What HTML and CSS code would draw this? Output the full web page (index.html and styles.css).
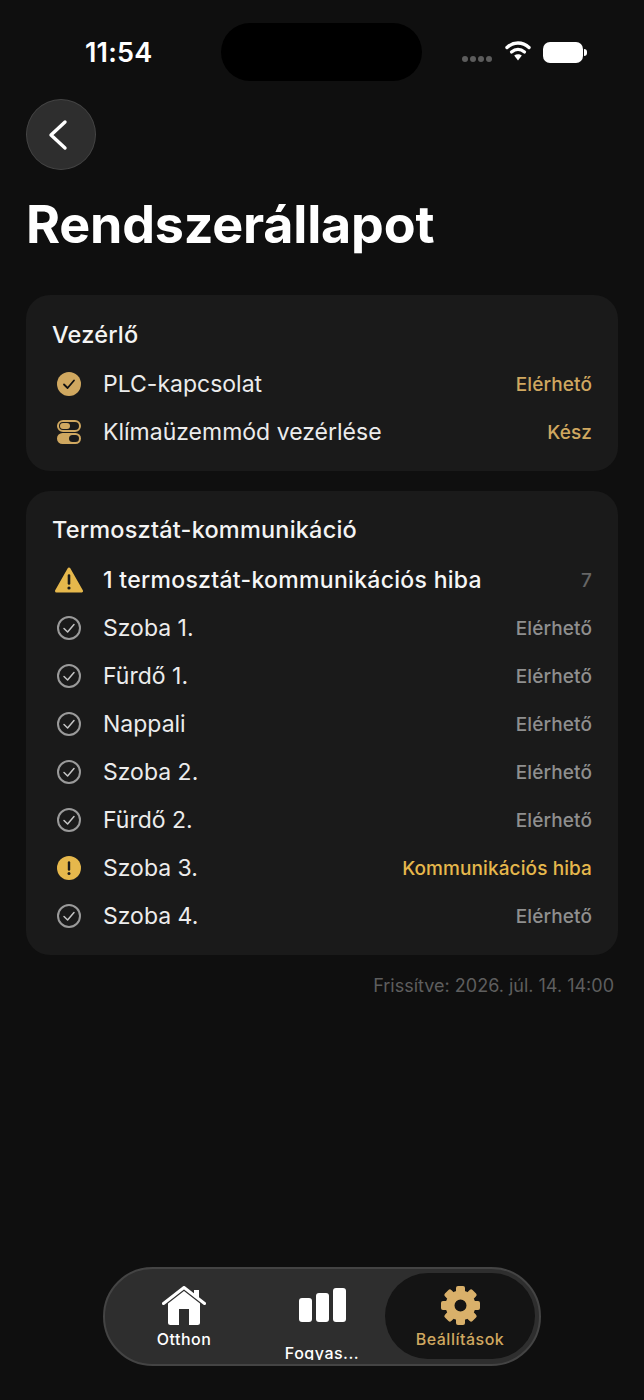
FILE: index.html
```html
<!DOCTYPE html>
<html lang="hu">
<head>
  <meta charset="UTF-8">
  <title>Rendszerállapot</title>
  <link rel="stylesheet" href="styles.css">
</head>
<body>

<div class="screen">
  <div class="statusbar">
    <div class="time">11:54</div>
    <div class="island"></div>
    <div class="status-icons">
      <div class="dots"><i></i><i></i><i></i><i></i></div>
      <svg class="wifi" width="26" height="21" viewBox="0 0 26 21">
        <path d="M2 7.5C8.5 1.5 17.5 1.5 24 7.5" fill="none" stroke="#fff" stroke-width="3.4" stroke-linecap="round"/>
        <path d="M6.5 12C10.5 8.6 15.5 8.6 19.5 12" fill="none" stroke="#fff" stroke-width="3.2" stroke-linecap="round"/>
        <path d="M9.2 15.6C11.4 13.8 14.6 13.8 16.8 15.6L13 20.5Z" fill="#fff"/>
      </svg>
      <div class="battery"></div>
    </div>
  </div>

  <button class="back">
    <svg width="22" height="32" viewBox="0 0 22 32"><path d="M18 3L4 16L18 29" fill="none" stroke="#fff" stroke-width="3.4" stroke-linecap="round" stroke-linejoin="round"/></svg>
  </button>

  <h1>Rendszerállapot</h1>

  <div class="card">
    <h2>Vezérlő</h2>
    <div class="row">
      <svg class="icon" width="28" height="24" viewBox="0 0 28 24"><circle cx="14" cy="12" r="12" fill="#d0a860"/><path d="M9 12.5L12.6 16L19 8.5" fill="none" stroke="#111" stroke-width="1.8" stroke-linecap="round" stroke-linejoin="round"/></svg>
      <span class="name">PLC-kapcsolat</span>
      <span class="val gold">Elérhető</span>
    </div>
    <div class="row">
      <svg class="icon" width="28" height="24" viewBox="0 0 28 24">
        <rect x="3" y="1" width="22" height="10" rx="5" fill="none" stroke="#d0a860" stroke-width="2"/>
        <rect x="5" y="3" width="10" height="6" rx="3" fill="#d0a860"/>
        <rect x="2" y="13" width="24" height="11" rx="5.5" fill="#d0a860"/>
        <rect x="14" y="15" width="10" height="7" rx="3.5" fill="#1a1a1a"/>
      </svg>
      <span class="name">Klímaüzemmód vezérlése</span>
      <span class="val gold">Kész</span>
    </div>
  </div>

  <div class="card card-comm">
    <h2>Termosztát-kommunikáció</h2>
    <div class="row">
      <svg class="icon" width="28" height="26" viewBox="0 0 28 26"><path d="M14 2L26.5 24H1.5Z" fill="#e6b84c" stroke="#e6b84c" stroke-width="3" stroke-linejoin="round"/><path d="M14 8.5V16.5" stroke="#1a1a1a" stroke-width="2.6" stroke-linecap="round"/><circle cx="14" cy="21" r="1.6" fill="#1a1a1a"/></svg>
      <span class="name strong">1 termosztát-kommunikációs hiba</span>
      <span class="val count">7</span>
    </div>
    <div class="row">
      <svg class="icon" width="28" height="24" viewBox="0 0 28 24"><use href="#ok"/></svg>
      <span class="name">Szoba 1.</span>
      <span class="val">Elérhető</span>
    </div>
    <div class="row">
      <svg class="icon" width="28" height="24" viewBox="0 0 28 24"><use href="#ok"/></svg>
      <span class="name">Fürdő 1.</span>
      <span class="val">Elérhető</span>
    </div>
    <div class="row">
      <svg class="icon" width="28" height="24" viewBox="0 0 28 24"><use href="#ok"/></svg>
      <span class="name">Nappali</span>
      <span class="val">Elérhető</span>
    </div>
    <div class="row">
      <svg class="icon" width="28" height="24" viewBox="0 0 28 24"><use href="#ok"/></svg>
      <span class="name">Szoba 2.</span>
      <span class="val">Elérhető</span>
    </div>
    <div class="row">
      <svg class="icon" width="28" height="24" viewBox="0 0 28 24"><use href="#ok"/></svg>
      <span class="name">Fürdő 2.</span>
      <span class="val">Elérhető</span>
    </div>
    <div class="row">
      <svg class="icon" width="28" height="24" viewBox="0 0 28 24"><circle cx="14" cy="12" r="12" fill="#e6b84c"/><path d="M14 6.5V13.5" stroke="#1a1a1a" stroke-width="2.4" stroke-linecap="round"/><circle cx="14" cy="17.5" r="1.5" fill="#1a1a1a"/></svg>
      <span class="name">Szoba 3.</span>
      <span class="val yellow">Kommunikációs hiba</span>
    </div>
    <div class="row">
      <svg class="icon" width="28" height="24" viewBox="0 0 28 24"><use href="#ok"/></svg>
      <span class="name">Szoba 4.</span>
      <span class="val">Elérhető</span>
    </div>
  </div>

  <div class="updated">Frissítve: 2026. júl. 14. 14:00</div>

  <div class="tabbar">
    <div class="tab">
      <svg width="44" height="39" viewBox="0 0 44 39">
        <path d="M1.5 17.5L22 1.5L42.5 17.5" fill="none" stroke="#fff" stroke-width="3" stroke-linecap="round" stroke-linejoin="round"/>
        <path d="M32 4H37V12L32 8Z" fill="#fff"/>
        <path fill-rule="evenodd" d="M6 17.5L22 5L38 17.5V36.500Q38 39 35.500 39H8.500Q6 39 6 36.500ZM17 23V39H27V23Z" fill="#fff"/>
      </svg>
      <span>Otthon</span>
    </div>
    <div class="tab tab-clip">
      <svg width="47" height="34" viewBox="0 0 47 34">
        <rect x="0" y="10" width="13" height="24" rx="3" fill="#fff"/>
        <rect x="17" y="5" width="13" height="29" rx="3" fill="#fff"/>
        <rect x="34" y="0" width="13" height="34" rx="3" fill="#fff"/>
      </svg>
      <span>Fogyas...</span>
    </div>
    <div class="tab active">
      <svg width="39" height="39" viewBox="0 0 39 39">
        <circle cx="19.500" cy="19.500" r="10.500" fill="none" stroke="#d9b06a" stroke-width="9"/>
        <g fill="#d9b06a">
          <rect x="15" y="0" width="9" height="8" rx="2"/>
          <rect x="15" y="0" width="9" height="8" rx="2" transform="rotate(45 19.500 19.500)"/>
          <rect x="15" y="0" width="9" height="8" rx="2" transform="rotate(90 19.500 19.500)"/>
          <rect x="15" y="0" width="9" height="8" rx="2" transform="rotate(135 19.500 19.500)"/>
          <rect x="15" y="0" width="9" height="8" rx="2" transform="rotate(180 19.500 19.500)"/>
          <rect x="15" y="0" width="9" height="8" rx="2" transform="rotate(225 19.500 19.500)"/>
          <rect x="15" y="0" width="9" height="8" rx="2" transform="rotate(270 19.500 19.500)"/>
          <rect x="15" y="0" width="9" height="8" rx="2" transform="rotate(315 19.500 19.500)"/>
        </g>
      </svg>
      <span>Beállítások</span>
    </div>
  </div>
</div>

<svg class="defs" width="0" height="0">
  <g id="ok">
    <circle cx="14" cy="12" r="11" fill="none" stroke="#9a9a9a" stroke-width="2"/>
    <path d="M9 12.500L12.600 16L19 8.500" fill="none" stroke="#c4c4c4" stroke-width="1.500" stroke-linecap="round" stroke-linejoin="round"/>
  </g>
</svg>

</body>
</html>
```

FILE: styles.css
```css
body {
  margin: 0;
  background-color: #0f0f0f;
  font-family: Inter, "Liberation Sans", sans-serif;
  color: #fff;
}

.screen {
  height: 1400px;
  display: flex;
  flex-direction: column;
  overflow: hidden;
}

.defs {
  display: block;
}

.statusbar {
  display: grid;
  grid-template-columns: 221px 201px 1fr;
  height: 58px;
  margin-top: 23px;
  align-items: center;
}

.time {
  padding-left: 85px;
  font-size: 27px;
  font-weight: 600;
  letter-spacing: 0.2px;
}

.island {
  height: 58px;
  background: #000;
  border-radius: 29px;
}

.status-icons {
  display: flex;
  align-items: center;
  padding-left: 40px;
}

.dots {
  display: flex;
  gap: 2px;
  margin-top: 14px;
}

.dots i {
  width: 6px;
  height: 6px;
  border-radius: 50%;
  background: #5c5c5c;
}

.wifi {
  margin: -4px 12px 0 13px;
}

.battery {
  position: relative;
  width: 40px;
  height: 21px;
  background: #fff;
  border-radius: 7px;
}

.battery::after {
  content: "";
  position: absolute;
  right: -4px;
  top: 7px;
  width: 3px;
  height: 7px;
  background: #fff;
  border-radius: 0 3px 3px 0;
}

.back {
  width: 70px;
  height: 71px;
  margin: 18px 0 0 26px;
  padding: 0 6px 0 0;
  display: flex;
  align-items: center;
  justify-content: center;
  background: #2e2e2e;
  border: 1px solid #444;
  border-radius: 50%;
}

h1 {
  margin: 23px 0 38px 26px;
  font-size: 52px;
  line-height: 64px;
  font-weight: 700;
  letter-spacing: -0.2px;
}

.card {
  margin: 0 26px;
  padding: 24px 26px 15px;
  background: #1a1a1a;
  border-radius: 24px;
}

.card-comm {
  margin-top: 20px;
  padding-top: 23px;
}

.card-comm h2 {
  margin-bottom: 10px;
}

h2 {
  margin: 0 0 9px;
  font-size: 23.5px;
  line-height: 32px;
  font-weight: 500;
  letter-spacing: 0.2px;
  color: #f4f4f4;
}

.row {
  display: flex;
  align-items: center;
  height: 48px;
}

.icon {
  flex: none;
  margin: 0 20px 0 3px;
}

.name {
  flex: 1;
  font-size: 23px;
  color: #ececec;
}

.strong {
  font-weight: 500;
  letter-spacing: 0.3px;
  color: #f6f6f6;
}

.val {
  font-size: 19px;
  font-weight: 500;
  letter-spacing: 0.1px;
  color: #8f8f8f;
}

.gold {
  color: #d0a860;
}

.yellow {
  color: #e6b84c;
}

.count {
  color: #666;
}

.updated {
  margin: 19px 30px 0 0;
  text-align: right;
  font-size: 18px;
  line-height: 24px;
  color: #5e5e5e;
}

/* floating tab bar */
.tabbar {
  box-sizing: border-box;
  display: flex;
  width: 438px;
  height: 99px;
  margin: auto 0 34px 103px;
  padding: 4px 4px 4px 10px;
  background: #2e2e2e;
  border: 2px solid #444;
  border-radius: 50px;
}

.tab {
  box-sizing: border-box;
  flex: none;
  width: 138px;
  height: 86px;
  display: flex;
  flex-direction: column;
  align-items: center;
  padding-top: 13px;
  overflow: hidden;
  font-size: 16px;
  font-weight: 500;
  letter-spacing: 0.5px;
}

.tab svg,
.tab span {
  flex: none;
}

.tab span {
  margin-top: 4px;
  line-height: 20px;
}

.tab-clip {
  height: 87px;
}

.tab-clip svg {
  margin-top: 2px;
}

.tab-clip span {
  margin-top: 21px;
}

.active {
  width: 150px;
  margin-left: -6px;
  background: #141414;
  border-radius: 44px;
  color: #d0a860;
}
```
